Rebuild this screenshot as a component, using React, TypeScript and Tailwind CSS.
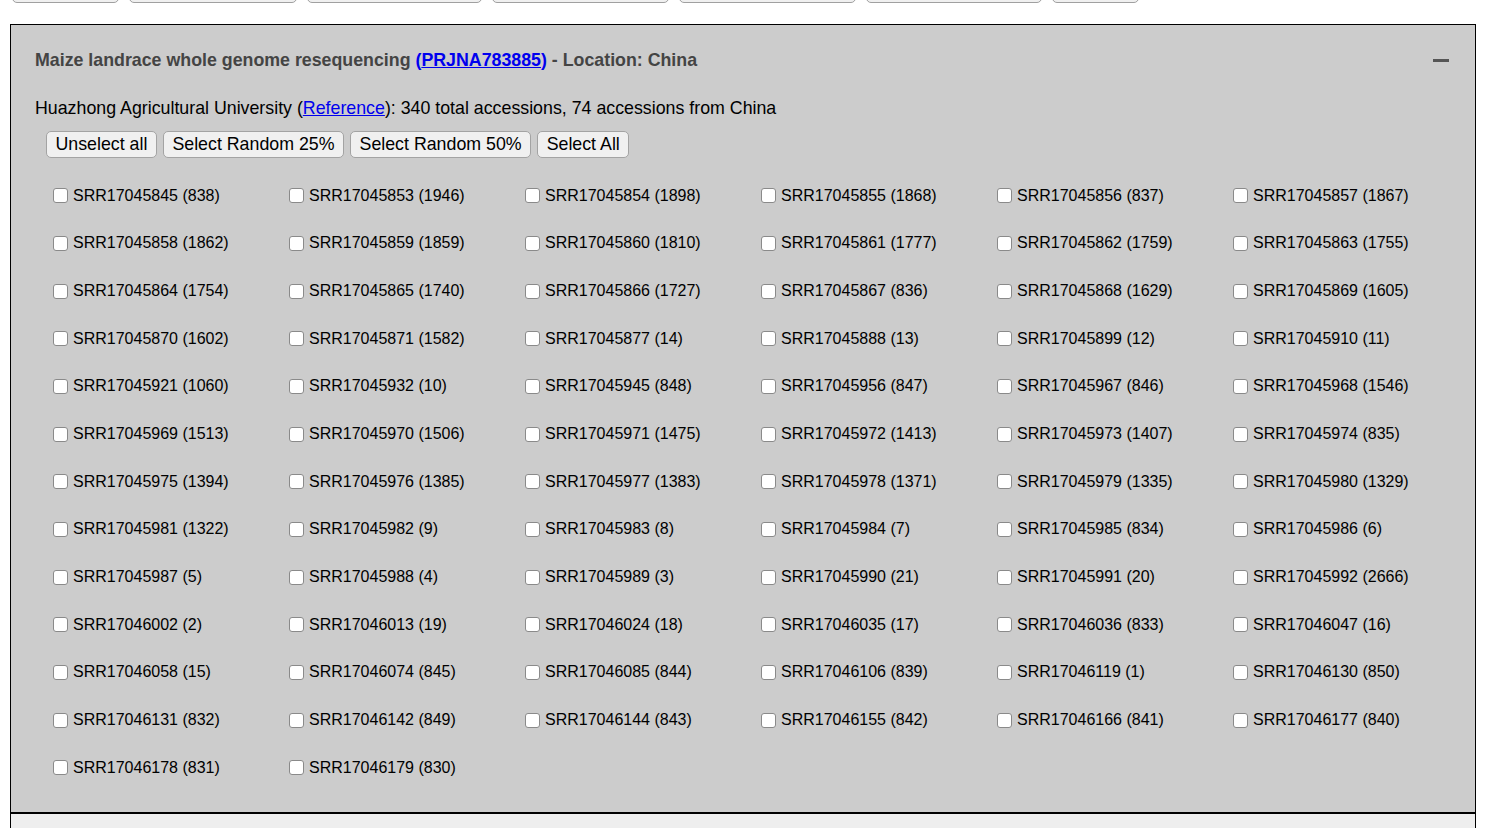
const accessions: [string, number][] = [
  ["SRR17045845", 838], ["SRR17045853", 1946], ["SRR17045854", 1898], ["SRR17045855", 1868], ["SRR17045856", 837], ["SRR17045857", 1867],
  ["SRR17045858", 1862], ["SRR17045859", 1859], ["SRR17045860", 1810], ["SRR17045861", 1777], ["SRR17045862", 1759], ["SRR17045863", 1755],
  ["SRR17045864", 1754], ["SRR17045865", 1740], ["SRR17045866", 1727], ["SRR17045867", 836], ["SRR17045868", 1629], ["SRR17045869", 1605],
  ["SRR17045870", 1602], ["SRR17045871", 1582], ["SRR17045877", 14], ["SRR17045888", 13], ["SRR17045899", 12], ["SRR17045910", 11],
  ["SRR17045921", 1060], ["SRR17045932", 10], ["SRR17045945", 848], ["SRR17045956", 847], ["SRR17045967", 846], ["SRR17045968", 1546],
  ["SRR17045969", 1513], ["SRR17045970", 1506], ["SRR17045971", 1475], ["SRR17045972", 1413], ["SRR17045973", 1407], ["SRR17045974", 835],
  ["SRR17045975", 1394], ["SRR17045976", 1385], ["SRR17045977", 1383], ["SRR17045978", 1371], ["SRR17045979", 1335], ["SRR17045980", 1329],
  ["SRR17045981", 1322], ["SRR17045982", 9], ["SRR17045983", 8], ["SRR17045984", 7], ["SRR17045985", 834], ["SRR17045986", 6],
  ["SRR17045987", 5], ["SRR17045988", 4], ["SRR17045989", 3], ["SRR17045990", 21], ["SRR17045991", 20], ["SRR17045992", 2666],
  ["SRR17046002", 2], ["SRR17046013", 19], ["SRR17046024", 18], ["SRR17046035", 17], ["SRR17046036", 833], ["SRR17046047", 16],
  ["SRR17046058", 15], ["SRR17046074", 845], ["SRR17046085", 844], ["SRR17046106", 839], ["SRR17046119", 1], ["SRR17046130", 850],
  ["SRR17046131", 832], ["SRR17046142", 849], ["SRR17046144", 843], ["SRR17046155", 842], ["SRR17046166", 841], ["SRR17046177", 840],
  ["SRR17046178", 831], ["SRR17046179", 830],
];

// widths of the tab-like buttons scrolled mostly out of view at the top
const topButtons = [107, 168, 175, 177, 177, 176, 87];

const btn =
  "h-[27px] rounded-[5px] border border-[#a3a3a3] bg-[#f0f0f0] px-[8.5px] text-[17.8px] leading-none text-black";

export default function App() {
  return (
    <div className="min-h-screen bg-white text-black [font-family:'Liberation_Sans',Arial,sans-serif]">
      <div className="flex h-[3px] items-end gap-[10px] overflow-hidden pl-[12px]">
        {topButtons.map((w, i) => (
          <div
            key={i}
            style={{ width: w }}
            className="h-[20px] shrink-0 rounded-[5px] border border-[#a0a0a0] bg-[#f0f0f0]"
          />
        ))}
      </div>

      <div className="ml-[10px] mr-[18px] mt-[21px] border border-b-2 border-black bg-[#cccccc] pb-[20px] pl-[24px] pr-[26px] pt-[25px]">
        <div className="flex items-center justify-between">
          <h2 className="text-[17.8px] font-bold leading-[21px] text-[#444444]">
            Maize landrace whole genome resequencing{" "}
            <span className="text-[#0000ee]">
              (<a href="#" className="underline">PRJNA783885</a>)
            </span>{" "}
            - Location: China
          </h2>
          <div className="h-[3px] w-[16px] bg-[#555555]" />
        </div>

        <p className="mt-[27px] text-[17.8px] leading-[21px]">
          Huazhong Agricultural University (
          <a href="#" className="text-[#0000ee] underline">Reference</a>
          ): 340 total accessions, 74 accessions from China
        </p>

        <div className="mt-[12px] flex gap-[6px] pl-[11px]">
          <button className={btn}>Unselect all</button>
          <button className={btn}>Select Random 25%</button>
          <button className={btn}>Select Random 50%</button>
          <button className={btn}>Select All</button>
        </div>

        <div className="mt-[14px] grid grid-cols-[repeat(6,236px)] pl-[18px]">
          {accessions.map(([id, n]) => (
            <label key={id} className="flex h-[47.667px] items-center gap-[5px] text-[16px] leading-none">
              <input
                type="checkbox"
                className="m-0 box-border h-[15px] w-[15px] shrink-0 appearance-none rounded-[3px] border border-[#8a8a8a] bg-white"
              />
              <span>
                {id} ({n})
              </span>
            </label>
          ))}
        </div>
      </div>

      <div className="ml-[10px] mr-[18px] h-[14px] border-x border-black bg-[#eeeeee]" />
    </div>
  );
}
